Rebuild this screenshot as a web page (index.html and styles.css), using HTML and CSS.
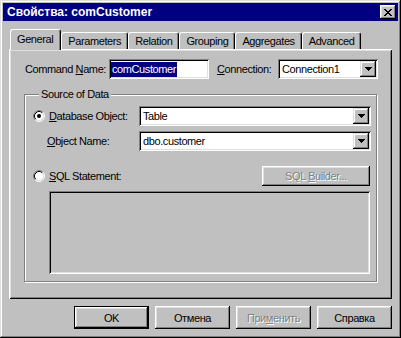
FILE: index.html
```html
<!DOCTYPE html>
<html lang="ru">

<head>
    <meta charset="UTF-8">
    <title>Свойства: comCustomer</title>
    <link rel="stylesheet" href="styles.css">
</head>

<body>

    <div class="window">
        <!-- Title bar -->
        <div class="titlebar">
            <span class="title">Свойства: comCustomer</span>
            <span class="close">
                <svg width="8" height="7" viewBox="0 0 8 7">
                    <path d="M0 0h2v1h1v1h2v-1h1v-1h2v1h-1v1h-1v1h-1v1h1v1h1v1h1v1h-2v-1h-1v-1h-2v1h-1v1h-2v-1h1v-1h1v-1h1v-1h-1v-1h-1v-1h-1z" fill="#000"/>
                </svg>
            </span>
        </div>

        <!-- Tabs -->
        <div class="tabs">
            <div class="tab active">General</div>
            <div class="tab">Parameters</div>
            <div class="tab">Relation</div>
            <div class="tab">Grouping</div>
            <div class="tab">Aggregates</div>
            <div class="tab">Advanced</div>
        </div>

        <div class="panel">
            <div class="top-row">
                <span class="lbl lbl-name">Command <u>N</u>ame:</span>
                <div class="field name-field"><span class="sel">comCustomer</span></div>
                <span class="lbl lbl-conn"><u>C</u>onnection:</span>
                <div class="combo conn-combo">
                    <span class="val">Connection1</span>
                    <span class="drop"><svg width="7" height="4" viewBox="0 0 7 4"><path d="M0 0h7v1h-1v1h-1v1h-1v1h-1v-1h-1v-1h-1v-1h-1z" fill="#000"/></svg></span>
                </div>
            </div>

            <fieldset class="group">
                <legend>Source of Data</legend>

                <div class="grow">
                    <div class="gcol">
                        <svg class="radio" width="12" height="12" viewBox="0 0 12 12">
                            <circle cx="6" cy="6" r="4.5" fill="#fff"/>
                            <path d="M2.11 9.89A5.5 5.5 0 0 1 9.89 2.11" stroke="#808080" fill="none"/>
                            <path d="M9.89 2.11A5.5 5.5 0 0 1 2.11 9.89" stroke="#fff" fill="none"/>
                            <path d="M2.82 9.18A4.5 4.5 0 0 1 9.18 2.82" stroke="#000" fill="none"/>
                            <path d="M9.18 2.82A4.5 4.5 0 0 1 2.82 9.18" stroke="#dfdfdf" fill="none"/>
                            <circle cx="6" cy="6" r="2" fill="#000"/>
                        </svg>
                        <span><u>D</u>atabase Object:</span>
                    </div>
                    <div class="combo wide">
                        <span class="val">Table</span>
                        <span class="drop"><svg width="7" height="4" viewBox="0 0 7 4"><path d="M0 0h7v1h-1v1h-1v1h-1v1h-1v-1h-1v-1h-1v-1h-1z" fill="#000"/></svg></span>
                    </div>
                </div>

                <div class="grow row2">
                    <div class="gcol indent"><span><u>O</u>bject Name:</span></div>
                    <div class="combo wide">
                        <span class="val">dbo.customer</span>
                        <span class="drop"><svg width="7" height="4" viewBox="0 0 7 4"><path d="M0 0h7v1h-1v1h-1v1h-1v1h-1v-1h-1v-1h-1v-1h-1z" fill="#000"/></svg></span>
                    </div>
                </div>

                <div class="grow row3">
                    <div class="gcol">
                        <svg class="radio" width="12" height="12" viewBox="0 0 12 12">
                            <circle cx="6" cy="6" r="4.5" fill="#fff"/>
                            <path d="M2.11 9.89A5.5 5.5 0 0 1 9.89 2.11" stroke="#808080" fill="none"/>
                            <path d="M9.89 2.11A5.5 5.5 0 0 1 2.11 9.89" stroke="#fff" fill="none"/>
                            <path d="M2.82 9.18A4.5 4.5 0 0 1 9.18 2.82" stroke="#000" fill="none"/>
                            <path d="M9.18 2.82A4.5 4.5 0 0 1 2.82 9.18" stroke="#dfdfdf" fill="none"/>
                        </svg>
                        <span><u>S</u>QL Statement:</span>
                    </div>
                    <span class="btn disabled sql-btn"><span>SQL <u>B</u>uilder...</span></span>
                </div>

                <div class="sql-box"></div>
            </fieldset>
        </div>

        <!-- Dialog buttons -->
        <div class="buttons">
            <span class="btn default">OK</span>
            <span class="btn">Отмена</span>
            <span class="btn disabled"><span>При<u>м</u>енить</span></span>
            <span class="btn">Справка</span>
        </div>
    </div>

</body>

</html>
```

FILE: styles.css
```css
body {
    margin: 0;
    font-family: 'Liberation Sans', Arial, sans-serif;
    font-size: 11px;
    letter-spacing: -0.4px;
    color: #000;
    background-color: #c0c0c0;
}

.window {
    width: 401px;
    height: 338px;
    box-sizing: border-box;
    padding: 3px;
    display: flex;
    flex-direction: column;
    background-color: #c0c0c0;
    box-shadow: inset -1px -1px #000, inset 1px 1px #dfdfdf,
        inset -2px -2px #808080, inset 2px 2px #fff;
}

.titlebar {
    height: 18px;
    display: flex;
    align-items: center;
    justify-content: space-between;
    padding: 0 2px 0 4px;
    background-color: #000080;
    color: #fff;
    font-size: 12px;
    font-weight: bold;
    letter-spacing: 0;
}

.close {
    width: 16px;
    height: 14px;
    display: flex;
    align-items: center;
    justify-content: center;
    background-color: #c0c0c0;
    box-shadow: inset -1px -1px #000, inset 1px 1px #fff,
        inset -2px -2px #808080, inset 2px 2px #dfdfdf;
}

/* tabs */
.tabs {
    height: 20px;
    display: flex;
    align-items: flex-end;
    margin: 8px 0 0 7px;
}

.tab {
    position: relative;
    height: 17px;
    box-sizing: border-box;
    padding: 2px 6px 0 6px;
    border-top: 1px solid #fff;
    border-left: 1px solid #fff;
    border-right: 1px solid #000;
    border-radius: 3px 3px 0 0;
    box-shadow: inset -1px 0 #808080;
}

.tab.active {
    z-index: 1;
    height: 21px;
    margin-bottom: -1px;
    padding: 3px 7px 0 6px;
    background-color: #c0c0c0;
}

.panel {
    height: 250px;
    box-sizing: border-box;
    margin: 0 6px;
    padding: 10px 0 0 15px;
    box-shadow: inset 1px 1px #fff, inset -1px -1px #000,
        inset 2px 2px #dfdfdf, inset -2px -2px #808080;
}

.top-row {
    display: flex;
    align-items: center;
    height: 20px;
}

.lbl-name {
    width: 84px;
    margin-left: 1px;
}

.lbl-conn {
    width: 61px;
    margin-left: 8px;
}

.field,
.combo {
    height: 20px;
    box-sizing: border-box;
    display: flex;
    align-items: center;
    background-color: #fff;
    box-shadow: inset 1px 1px #808080, inset -1px -1px #fff,
        inset 2px 2px #000, inset -2px -2px #dfdfdf;
}

.field {
    width: 100px;
    padding: 0 2px;
}

.sel {
    background-color: #000080;
    color: #fff;
    padding: 1px 1px 2px 1px;
}

.combo {
    padding: 2px;
}

.conn-combo {
    width: 100px;
}

.combo .val {
    flex: 1;
    padding-left: 2px;
}

.drop {
    width: 16px;
    height: 16px;
    display: flex;
    align-items: center;
    justify-content: center;
    background-color: #c0c0c0;
    box-shadow: inset -1px -1px #000, inset 1px 1px #dfdfdf,
        inset -2px -2px #808080, inset 2px 2px #fff;
}

/* Source of Data group */
.group {
    width: 353px;
    box-sizing: border-box;
    margin: 9px 0 0 0;
    padding: 5px 5px 7px 8px;
    border: 1px solid #808080;
    box-shadow: inset 1px 1px #fff, 1px 1px #fff;
}

.group legend {
    margin-left: 6px;
    padding: 0 2px;
    line-height: 13px;
    background-color: #c0c0c0;
}

.grow {
    display: flex;
    align-items: center;
}

.gcol {
    width: 106px;
    display: flex;
    align-items: center;
    gap: 4px;
}

.gcol.indent {
    padding-left: 14px;
    box-sizing: border-box;
}

.combo.wide {
    width: 232px;
}

.row2 {
    margin-top: 5px;
}

.row3 {
    margin-top: 15px;
}

.btn {
    width: 75px;
    height: 23px;
    box-sizing: border-box;
    display: flex;
    align-items: center;
    justify-content: center;
    background-color: #c0c0c0;
    box-shadow: inset -1px -1px #000, inset 1px 1px #fff,
        inset -2px -2px #808080, inset 2px 2px #dfdfdf;
}

.btn.disabled {
    color: #808080;
    text-shadow: 1px 1px #fff;
}

.sql-btn {
    width: 108px;
    height: 20px;
    margin-left: auto;
    margin-right: 1px;
}

.sql-box {
    width: 321px;
    height: 83px;
    box-sizing: border-box;
    margin: 5px 0 0 16px;
    box-shadow: inset 1px 1px #808080, inset -1px -1px #fff,
        inset 2px 2px #000, inset -2px -2px #dfdfdf;
}

.buttons {
    display: flex;
    justify-content: flex-end;
    gap: 6px;
    margin: 7px 6px 0 0;
}

.btn.default {
    border: 1px solid #000;
}
```
